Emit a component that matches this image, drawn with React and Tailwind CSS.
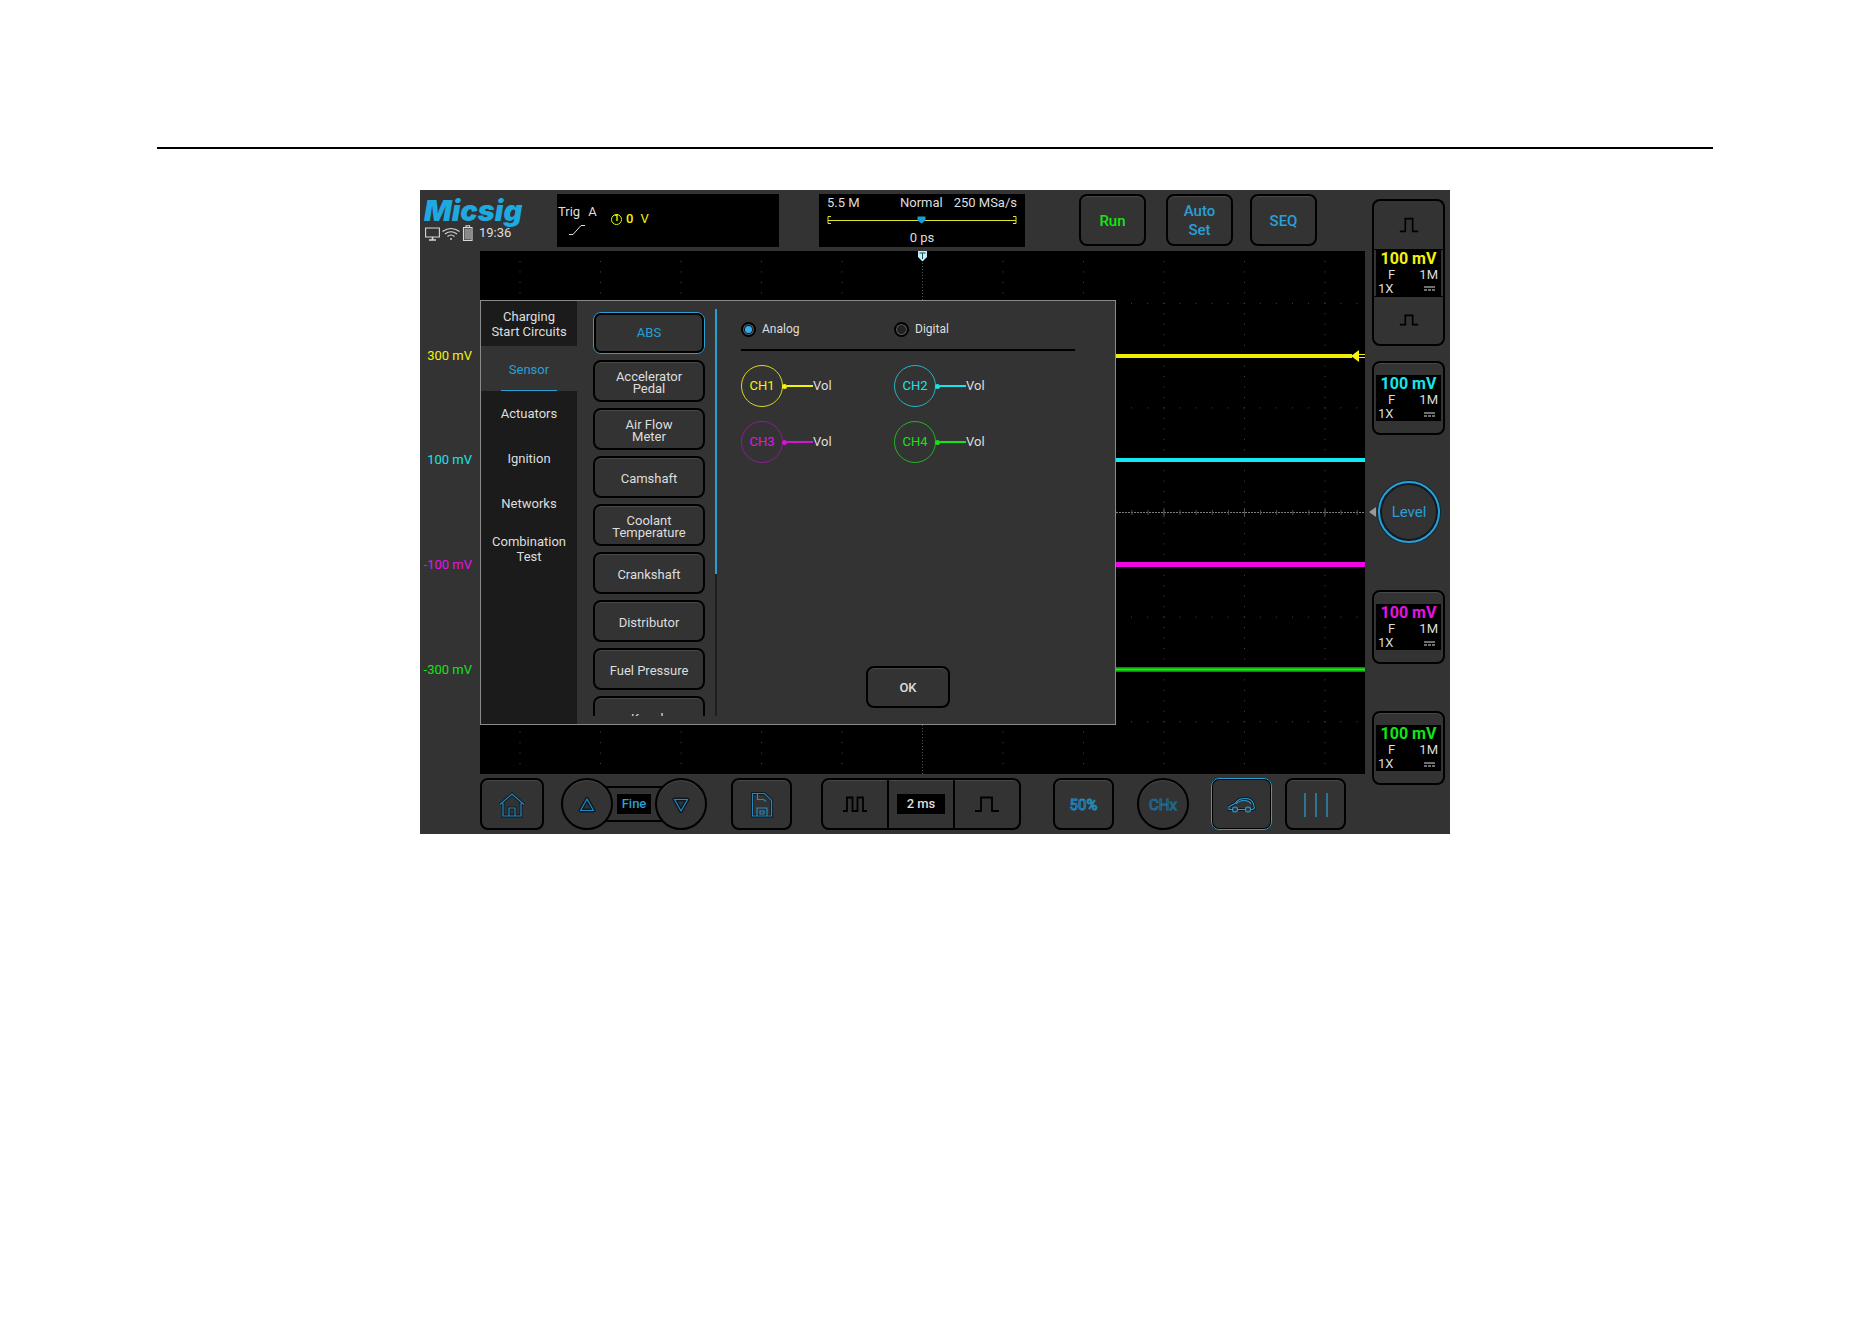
import { useState } from 'react';

const CATEGORIES = ['Charging Start Circuits', 'Sensor', 'Actuators', 'Ignition', 'Networks', 'Combination Test'];

const SENSORS = [
    'ABS', 'Accelerator Pedal', 'Air Flow Meter', 'Camshaft', 'Coolant Temperature',
    'Crankshaft', 'Distributor', 'Fuel Pressure', 'Knock',
];

const CHANNELS = [
    { name: 'CH1', offset: '300 mV', text: 'text-[#f2f20a]', border: 'border-[#d8d820]', bg: 'bg-[#f2f20a]' },
    { name: 'CH2', offset: '100 mV', text: 'text-[#18e4ea]', border: 'border-[#22b4c4]', bg: 'bg-[#18e4ea]' },
    { name: 'CH3', offset: '-100 mV', text: 'text-[#e414e4]', border: 'border-[#8c1c94]', bg: 'bg-[#d414d4]' },
    { name: 'CH4', offset: '-300 mV', text: 'text-[#14e414]', border: 'border-[#22b422]', bg: 'bg-[#14e414]' },
];

const KEY = 'flex items-center justify-center pt-[2px] border-2 border-black bg-[#333333] shadow-[inset_0_1px_0_#484848]';
const KEY_ACTIVE = 'flex items-center justify-center pt-[2px] border-2 border-black bg-[#333333] outline outline-1 -outline-offset-1 outline-[#2a9fd6]';

const Pulse = ({ d, className }) => (
    <svg viewBox="0 0 24 16" className={className} fill="none" stroke="#000" strokeWidth="1.8">
        <path d={d} />
    </svg>
);

const StatusIcons = () => (
    <svg viewBox="0 0 48 16" className="w-12 h-4" fill="none" stroke="#d8d8d8" strokeWidth="1.1">
        <path d="M.6 3h13.800v9H.6z" />
        <path d="M7.500 12v3M4 15h7" strokeWidth="1.6" />
        <path d="M17.500 6.500q8.500-6 17 0 M20 9q6-4.500 12 0 M22.500 11.500q3.500-3 7 0" />
        <circle cx="26" cy="14" r=".9" fill="#d8d8d8" stroke="none" />
        <path d="M38.500 2.500h8.500v13h-8.500z M41 2.500v-1.800h3.500v1.800" />
        <path d="M39.500 3.500h6.500v11h-6.500z" fill="#8a8a8a" stroke="none" />
    </svg>
);

const Readout = ({ color }) => (
    <div className="bg-black mx-[2px] h-[46px] text-[#dcdcdc]">
        <div className={`text-center text-base leading-[18px] font-bold ${color}`}>100 mV</div>
        <div className="flex justify-between pl-3 pr-[3px] text-[13px] leading-[14px]"><span>F</span><span>1M</span></div>
        <div className="flex justify-between items-center pl-[2px] pr-[6px] text-[13px] leading-[14px]">
            <span>1X</span>
            <svg viewBox="0 0 11 5" className="w-[11px] h-[5px]" stroke="#dcdcdc" strokeWidth="1">
                <path d="M0 1h11" />
                <path d="M0 4h11" strokeDasharray="3 1" />
            </svg>
        </div>
    </div>
);

const ChannelKey = ({ channel }) => (
    <button type="button" aria-label={channel.name} className="w-full h-[74px] rounded-lg border-2 border-black bg-[#333333] shadow-[inset_0_1px_0_#484848]">
        <Readout color={channel.text} />
    </button>
);

// Graticule, traces and trigger markers
const Waveforms = () => {
    const columns = [-5, -4, -3, -2, -1, 1, 2, 3, 4, 5].map((n) => 442.5 + n * 80.5);
    const rows = [0.5, 1.5, 3.5, 4.5].map((n) => n * 104.6);
    const ticks = Array.from({ length: 55 }, (_, i) => 442.5 + (i - 27) * 16.1);

    return (
        <svg viewBox="0 0 885 523" preserveAspectRatio="none" className="block w-full h-full">
            <g stroke="#484848" fill="none">
                {columns.map((x) => <path key={x} d={`M${x} 10v503`} strokeDasharray="1 9.46" />)}
                {rows.map((y) => <path key={y} d={`M7 ${y}h878`} strokeDasharray="1 15.1" />)}
            </g>
            <path d="M442.500 0v523" stroke="#505050" strokeDasharray="1 2" />
            <path d="M0 261.500h885" stroke="#7c7c7c" strokeDasharray="2 1" />
            <path d={ticks.map((x) => `M${x} 259v5`).join('')} stroke="#505050" />
            <path d={columns.map((x) => `M${x} 257v9`).join('')} stroke="#505050" />
            <path d="M0 105h872" stroke="#f0ec08" strokeWidth="4" />
            <path d="M0 209h885" stroke="#12ecf0" strokeWidth="4" />
            <path d="M0 313.500h885" stroke="#ee06e6" strokeWidth="5" />
            <path d="M0 418.500h885" stroke="#0a8a0a" strokeWidth="5" />
            <path d="M0 418.500h885" stroke="#14f014" strokeWidth="2" />
            <path d="M871 105l8-6v12z" fill="#f6f60a" />
            <path d="M879 103.500h6M879 106.500h6" stroke="#f6f60a" />
            <path d="M438 0h9v6l-4.500 4.500-4.500-4.500z" fill="#c8ecf6" />
            <path d="M439.500 2h6M442.500 2v6" stroke="#1a4a5a" />
        </svg>
    );
};

const SensorDialog = () => {
    const [category, setCategory] = useState('Sensor');
    const [sensor, setSensor] = useState('ABS');
    const [signal, setSignal] = useState('Analog');

    return (
        <section className="absolute left-0 top-[49px] bottom-[49px] w-[636px] flex border border-[#8a8a8a] bg-[#333333] text-[13px] text-[#dedede]">
            <nav className="w-24 shrink-0 bg-[#1b1b1b]">
                {CATEGORIES.map((name) => (
                    <button
                        key={name}
                        type="button"
                        onClick={() => setCategory(name)}
                        className={name === category
                            ? 'flex flex-col items-center justify-end gap-[13px] w-full h-[45px] leading-[15px] bg-[#333333] text-[#2a9fd6]'
                            : 'flex items-center justify-center w-full h-[45px] px-2 leading-[15px]'}
                    >
                        {name}
                        {name === category && <span className="w-14 h-px bg-[#2a9fd6]" />}
                    </button>
                ))}
            </nav>

            <div className="flex pl-4 pt-2 pb-2">
                <div className="w-28 pt-[3px] flex flex-col gap-[6px] overflow-hidden">
                    {SENSORS.map((name) => (
                        <button
                            key={name}
                            type="button"
                            onClick={() => setSensor(name)}
                            className={name === sensor
                                ? 'shrink-0 h-[42px] rounded-lg border border-[#2a9fd6] text-[#2a9fd6]'
                                : 'shrink-0 h-[42px] px-[14px] pt-[3px] rounded-lg border-2 border-black leading-3 shadow-[inset_0_1px_0_#484848]'}
                        >
                            {name === sensor
                                ? <span className="flex items-center justify-center h-full rounded-[7px] border-2 border-black">{name}</span>
                                : name}
                        </button>
                    ))}
                </div>
                <div className="w-[2px] ml-[10px] bg-[#1e1e1e]">
                    <div className="h-[65%] bg-[#2a9fd6]" />
                </div>
            </div>

            <form className="flex-1 flex flex-col pl-6 pr-10 pt-[17px] pb-4">
                <div className="grid grid-cols-[153px_1fr] pb-[9px] border-b-2 border-black text-xs">
                    {['Analog', 'Digital'].map((name) => (
                        <label key={name} className="flex items-center gap-[6px] h-[22px]">
                            <input
                                type="radio"
                                name="signal"
                                checked={signal === name}
                                onChange={() => setSignal(name)}
                                className="appearance-none size-[15px] rounded-full border-2 border-black bg-[#222222] shadow-[inset_0_0_0_1px_#606060] checked:bg-[#35aef0] checked:shadow-[inset_0_0_0_1px_#606060,inset_0_0_0_2px_#101820]"
                            />
                            {name}
                        </label>
                    ))}
                </div>
                <div className="grid grid-cols-[153px_1fr] gap-y-[14px] pt-[14px]">
                    {CHANNELS.map((ch) => (
                        <div key={ch.name} className="flex items-center">
                            <span className={`flex items-center justify-center size-[42px] rounded-full border ${ch.border} ${ch.text}`}>{ch.name}</span>
                            <span className={`size-[5px] -ml-px rounded-full ${ch.bg}`} />
                            <span className={`w-[26px] h-[2px] ${ch.bg}`} />
                            <span>Vol</span>
                        </div>
                    ))}
                </div>
                <button type="button" className={`${KEY} mt-auto self-center w-[84px] h-[42px] rounded-lg font-medium`}>OK</button>
            </form>
        </section>
    );
};

const TopBar = () => (
    <header className="col-span-2 h-[61px] flex items-start pt-1">
        <div className="w-[137px] pl-1">
            <div className="pt-[3px] font-['Inter'] text-[29px] leading-[27px] font-black italic text-[#1fa9e1]">Micsig</div>
            <div className="flex items-center gap-[6px] pt-[1px] pl-px text-[13px] leading-4 text-[#dedede]">
                <StatusIcons />
                19:36
            </div>
        </div>
        <div className="flex w-[222px] h-[53px] bg-black text-[13px]">
            <div className="w-[54px] pt-[10px] pl-px text-[#dedede] leading-4">
                <div className="flex gap-2"><span>Trig</span><span>A</span></div>
                <svg viewBox="0 0 18 12" className="w-[18px] h-3 ml-[10px] mt-1" fill="none" stroke="#dedede">
                    <path d="M1 10.500h4l8-9h4" />
                </svg>
            </div>
            <div className="flex items-center h-4 mt-[17px] gap-1 text-[#f2f20a]">
                <span className="flex items-center justify-center size-[11px] rounded-full border border-[#f2f20a] text-[9px] font-bold">1</span>
                <span className="font-medium">0</span>
                <span className="pl-[3px]">V</span>
            </div>
        </div>
        <div className="w-[206px] h-[53px] ml-10 px-2 pt-[1px] bg-black text-[13px] leading-4 text-[#dedede]">
            <div className="flex justify-between">
                <span className="w-[73px]">5.5 M</span><span className="flex-1">Normal</span><span>250 MSa/s</span>
            </div>
            <svg viewBox="0 0 190 10" className="block w-full h-[10px] my-1" fill="none" stroke="#e4e428">
                <path d="M1 5.500h188" />
                <path d="M4 1.500H1v7h3M186 1.500h3v7h-3" />
                <path d="M90.500 1.500h8v4l-4 3-4-3z" fill="#1c9bd2" stroke="none" />
            </svg>
            <div className="pt-[1px] text-center">0 ps</div>
        </div>
        <button type="button" className={`${KEY} w-[67px] h-[52px] ml-[54px] rounded-lg text-[15px] font-medium text-[#10e810]`}>Run</button>
        <button type="button" className={`${KEY} w-[67px] h-[52px] ml-5 px-3 rounded-lg text-[15px] leading-[19px] font-medium text-[#2a9fd6]`}>Auto Set</button>
        <button type="button" className={`${KEY} w-[67px] h-[52px] ml-[17px] rounded-lg text-[15px] font-medium text-[#2a9fd6]`}>SEQ</button>
    </header>
);

const ChannelColumn = () => (
    <aside className="row-span-3 flex flex-col pt-[9px] pl-[7px] pr-[5px]">
        <div className="h-[147px] flex flex-col rounded-lg border-2 border-black">
            <button type="button" aria-label="Scale up" className="flex-1 flex items-center justify-center border-b border-black">
                <Pulse d="M2 15h6V1h8v14h6" className="w-[22px] h-4" />
            </button>
            <Readout color={CHANNELS[0].text} />
            <button type="button" aria-label="Scale down" className="flex-1 flex items-center justify-center border-t border-black">
                <Pulse d="M2 13h6V3h8v10h6" className="w-[22px] h-4" />
            </button>
        </div>
        <div className="mt-[15px]"><ChannelKey channel={CHANNELS[1]} /></div>
        <div className="mt-[46px] flex items-center -ml-[3px]">
            <svg viewBox="0 0 7 10" className="w-[7px] h-[10px]"><path d="M0 5l7-5v10z" fill="#9a9a9a" /></svg>
            <button type="button" className="size-[62px] ml-[2px] rounded-full border-2 border-[#2a9fd6] p-[2px] shadow-[0_0_0_1px_#0a2a3a,inset_0_0_0_2px_#0c1c26] text-[15px] text-[#2a9fd6]">
                Level
            </button>
        </div>
        <div className="mt-[47px]"><ChannelKey channel={CHANNELS[2]} /></div>
        <div className="mt-[47px]"><ChannelKey channel={CHANNELS[3]} /></div>
    </aside>
);

const BottomBar = () => (
    <footer className="col-start-2 h-[60px] flex items-start pt-1">
        <button type="button" aria-label="Home" className={`${KEY} w-16 h-[52px] rounded-lg`}>
            <svg viewBox="0 0 26 26" className="size-[26px]" fill="none" stroke="#0b1a24" strokeWidth="3">
                <path d="M1 12.500L13 2l12 10.500M4 11v13h18V11M10 24v-8h6v8" />
                <path d="M1 12.500L13 2l12 10.500M4 11v13h18V11M10 24v-8h6v8" stroke="#2489bd" strokeWidth="1.2" />
            </svg>
        </button>
        <div className="flex items-center ml-[17px]">
            <button type="button" aria-label="Fine up" className={`${KEY} z-10 size-[52px] rounded-full`}>
                <svg viewBox="0 0 18 16" className="w-[18px] h-4" fill="none" strokeLinejoin="round">
                    <path d="M9 2l6.500 11.500h-13z" stroke="#0b1a24" strokeWidth="4" />
                    <path d="M9 2l6.500 11.500h-13z" stroke="#2489bd" strokeWidth="1.2" />
                </svg>
            </button>
            <div className="h-9 w-[58px] -mx-2 flex items-center justify-center border-y-2 border-black">
                <span className="px-[5px] bg-black text-[13px] leading-5 font-medium text-[#2a9fd6]">Fine</span>
            </div>
            <button type="button" aria-label="Fine down" className={`${KEY} z-10 size-[52px] rounded-full`}>
                <svg viewBox="0 0 18 16" className="w-[18px] h-4" fill="none" strokeLinejoin="round">
                    <path d="M9 14L2.500 2.500h13z" stroke="#0b1a24" strokeWidth="4" />
                    <path d="M9 14L2.500 2.500h13z" stroke="#2489bd" strokeWidth="1.2" />
                </svg>
            </button>
        </div>
        <button type="button" aria-label="Save" className={`${KEY} w-[61px] h-[52px] ml-6 rounded-lg`}>
            <svg viewBox="0 0 22 26" className="w-[22px] h-[26px]" fill="none" stroke="#2489bd" strokeWidth="1.2">
                <path d="M1.500 1.500h12l7 7v15.500h-19z" stroke="#0b1a24" strokeWidth="3" />
                <path d="M1.500 1.500h12l7 7v15.500h-19zM6.500 2v5.500h6l2.500 2M6 24v-8h10v8M9 19h4v3H9z" />
            </svg>
        </button>
        <div className="flex h-[52px] w-[200px] ml-[29px] rounded-lg border-2 border-black shadow-[inset_0_1px_0_#484848]">
            <button type="button" aria-label="Time base down" className="flex-1 flex items-center justify-center">
                <Pulse d="M0 15h4V1.500h5.500V15h5V1.500H20V15h4" className="w-6 h-4" />
            </button>
            <div className="w-[68px] flex items-center justify-center border-x-2 border-black">
                <span className="w-12 text-center bg-black text-[13px] leading-5 font-medium text-[#dedede]">2 ms</span>
            </div>
            <button type="button" aria-label="Time base up" className="flex-1 flex items-center justify-center">
                <Pulse d="M0 15h6V1.500h11V15h7" className="w-6 h-4" />
            </button>
        </div>
        <button type="button" className={`${KEY} w-[61px] h-[52px] ml-8 rounded-lg text-[15px] text-[#10202a] [-webkit-text-stroke:1px_#2489bd]`}>50%</button>
        <button type="button" className={`${KEY} size-[52px] ml-[23px] rounded-full text-[15px] text-[#10202a] [-webkit-text-stroke:1px_#1f6f99]`}>CHx</button>
        <button type="button" aria-label="Automotive" className={`${KEY_ACTIVE} w-[61px] h-[52px] ml-[22px] rounded-lg`}>
            <svg viewBox="0 0 28 16" className="w-7 h-4" fill="none" stroke="#2a9fd6" strokeWidth="1.1">
                <path d="M5 12.500H1V9.500l6-3Q10 1.500 17 1.500q7 0 8.500 5.500l1 4-2 1.500h-1.500M9.500 12.500h8" stroke="#0b1a24" strokeWidth="3" />
                <path d="M5 12.500H1V9.500l6-3Q10 1.500 17 1.500q7 0 8.500 5.500l1 4-2 1.500h-1.500M9.500 12.500h8M8 7q3-3.500 8-3.500 5 0 7 3.500" />
                <circle cx="7" cy="12.500" r="2.500" />
                <circle cx="20" cy="12.500" r="2.500" />
            </svg>
        </button>
        <button type="button" aria-label="Cursors" className={`${KEY} w-[61px] h-[52px] ml-[13px] rounded-lg`}>
            <svg viewBox="0 0 26 24" className="w-[26px] h-6" stroke="#2a9fd6" strokeWidth="1.2">
                <path d="M2 0v24M13 0v24M24 0v24" />
            </svg>
        </button>
    </footer>
);

export default function App() {
    return (
        <main className="min-h-screen bg-white pl-[157px] pr-[159px] pt-[147px] font-['Roboto','Liberation_Sans',sans-serif]">
            <hr className="border-0 h-[2px] bg-black" />
            <div className="grid grid-cols-[60px_1fr_85px] w-full max-w-[1030px] mx-auto mt-[41px] bg-[#333333]">
                <TopBar />
                <ChannelColumn />
                <div className="grid grid-rows-4 py-[52px] text-[13px]">
                    {CHANNELS.map((ch) => (
                        <div key={ch.name} className={`flex items-center justify-end pr-2 ${ch.text}`}>{ch.offset}</div>
                    ))}
                </div>
                <div className="relative h-[523px] bg-black">
                    <Waveforms />
                    <SensorDialog />
                </div>
                <BottomBar />
            </div>
        </main>
    );
}
